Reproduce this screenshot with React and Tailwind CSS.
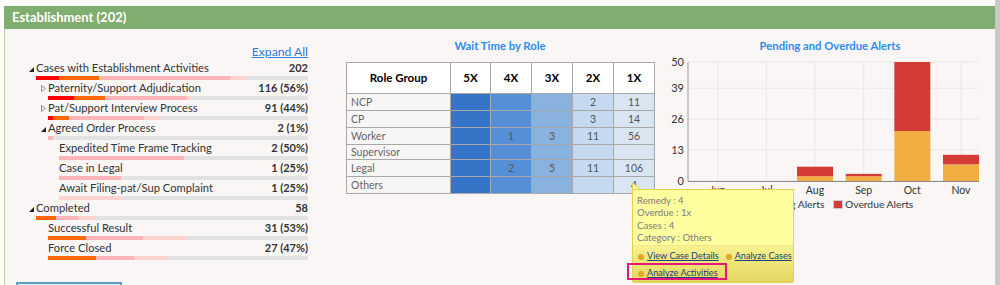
import React from 'react'

const FONT = { fontFamily: 'Lato, "Open Sans", "Liberation Sans", sans-serif' }

const SEG = {
  red: 'bg-[#ff0000]',
  orange: 'bg-[#ff6600]',
  pink: 'bg-[#fdb5ba]',
  light: 'bg-[#fdd4d1]',
}

// tree rows: indent = text start offset from tree start (x 27)
const rows = [
  { label: 'Cases with Establishment Activities', value: '202', indent: 9, toggle: 'open', segs: [['red', 23], ['orange', 40], ['pink', 131], ['light', 17]] },
  { label: 'Paternity/Support Adjudication', value: '116 (56%)', indent: 21, toggle: 'closed', segs: [['red', 26], ['orange', 31], ['pink', 82], ['light', 5]] },
  { label: 'Pat/Support Interview Process', value: '91 (44%)', indent: 21, toggle: 'closed', segs: [['red', 5], ['orange', 16], ['pink', 75], ['light', 17]] },
  { label: 'Agreed Order Process', value: '2 (1%)', indent: 21, toggle: 'open', segs: [['pink', 5]] },
  { label: 'Expedited Time Frame Tracking', value: '2 (50%)', indent: 32, segs: [['pink', 125]] },
  { label: 'Case in Legal', value: '1 (25%)', indent: 32, segs: [['pink', 62]] },
  { label: 'Await Filing-pat/Sup Complaint', value: '1 (25%)', indent: 32, segs: [['light', 62]] },
  { label: 'Completed', value: '58', indent: 9, toggle: 'open', segs: [['orange', 20], ['pink', 22], ['light', 18]] },
  { label: 'Successful Result', value: '31 (53%)', indent: 21, segs: [['orange', 38], ['pink', 57], ['light', 44]] },
  { label: 'Force Closed', value: '27 (47%)', indent: 21, segs: [['orange', 48], ['pink', 38], ['light', 35]] },
]

const Toggle = ({ kind }) => {
  if (kind === 'open') {
    return (
      <svg width="5" height="5" viewBox="0 0 5 5" className="absolute left-[-7px] top-[7px]">
        <polygon points="5,0 5,5 0,5" fill="#222" />
      </svg>
    )
  }
  return (
    <svg width="5" height="7" viewBox="0 0 5 7" className="absolute left-[-7px] top-[5px]">
      <polygon points="0.5,0.5 4.5,3.5 0.5,6.5" fill="none" stroke="#888" strokeWidth="0.9" />
    </svg>
  )
}

const TreeRow = ({ row }) => (
  <div style={{ paddingLeft: row.indent }}>
    <div className="relative flex h-[16px] items-center justify-between text-[11px] leading-[16px] text-[#333]">
      {row.toggle && <Toggle kind={row.toggle} />}
      <span className="text-[11.2px]">{row.label}</span>
      <span className="font-bold text-[#333]">{row.value}</span>
    </div>
    <div className="flex h-[4px] bg-[#e2e2e2]">
      {row.segs.map(([c, w], i) => (
        <div key={i} className={`h-full ${SEG[c]}`} style={{ width: w }} />
      ))}
    </div>
  </div>
)

const tableRows = [
  { role: 'NCP', v: ['', '', '', '2', '11'], h: 'h-[17px]' },
  { role: 'CP', v: ['', '', '', '3', '14'], h: 'h-[17px]' },
  { role: 'Worker', v: ['', '1', '3', '11', '56'], h: 'h-[17px]' },
  { role: 'Supervisor', v: ['', '', '', '', ''], h: 'h-[15px]' },
  { role: 'Legal', v: ['', '2', '5', '11', '106'], h: 'h-[17px]' },
  { role: 'Others', v: ['', '', '', '', '4'], h: 'h-[17px]' },
]
const colBg = ['bg-[#3574c6]', 'bg-[#5590d6]', 'bg-[#8ab2df]', 'bg-[#c5d9f0]', 'bg-[#dae5f2]']

const WaitTable = () => (
  <table className="w-[308px] table-fixed border-collapse text-[10.5px]">
    <colgroup>
      <col className="w-[104px]" />
      <col className="w-[40px]" />
      <col className="w-[41px]" />
      <col className="w-[41px]" />
      <col className="w-[41px]" />
      <col className="w-[41px]" />
    </colgroup>
    <thead>
      <tr className="h-[31px] bg-white">
        {['Role Group', '5X', '4X', '3X', '2X', '1X'].map((h) => (
          <th key={h} className="border border-[#a8a8a8] p-0 text-center text-[11.5px] font-bold text-black">{h}</th>
        ))}
      </tr>
    </thead>
    <tbody>
      {tableRows.map((r) => (
        <tr key={r.role} className={r.h}>
          <td className="border border-[#a8a8a8] bg-[#f7f5f5] p-0 pl-[4px] leading-[13px] text-[#666]">{r.role}</td>
          {r.v.map((v, i) => (
            <td key={i} className={`border border-[#a8a8a8] p-0 text-center leading-[13px] text-[#555] ${colBg[i]}`}>{v}</td>
          ))}
        </tr>
      ))}
    </tbody>
  </table>
)

const months = ['Jun', 'Jul', 'Aug', 'Sep', 'Oct', 'Nov']
const pending = [0, 0, 2, 2, 21, 7]
const overdue = [0, 0, 4, 1, 29, 4]

const AlertsChart = () => {
  const top = 8
  const base = 127
  const k = (base - top) / 50
  const cx = (i) => 63.7 + 48.66 * i
  const ticks = [50, 39, 26, 13, 0]
  const ty = (v) => base - v * k
  return (
    <svg width="341" height="160" viewBox="0 0 341 160" className="block">
      {ticks.map((t) => (
        <g key={t}>
          <line x1="34" x2="325" y1={ty(t)} y2={ty(t)} stroke="#e9e7e7" strokeWidth="1" />
          <text x="30" y={ty(t) + 4} textAnchor="end" fontSize="11" fill="#333" style={FONT}>{t}</text>
        </g>
      ))}
      {months.map((m, i) => (
        <line key={m} x1={cx(i)} x2={cx(i)} y1={top} y2={base} stroke="#e9e7e7" strokeWidth="1" />
      ))}
      {months.map((m, i) => {
        const p = pending[i] * k
        const o = overdue[i] * k
        if (!p && !o) return null
        return (
          <g key={m}>
            <rect x={cx(i) - 18} y={base - p} width="36" height={p} fill="#f0ae43" />
            <rect x={cx(i) - 18} y={base - p - o} width="36" height={o} fill="#d23b36" />
          </g>
        )
      })}
      <line x1="34" x2="325" y1={base + 0.5} y2={base + 0.5} stroke="#8a8a8a" strokeWidth="1.2" />
      <line x1="34" x2="34" y1={top} y2={base} stroke="#9a9a9a" strokeWidth="1" />
      {months.map((m, i) => (
        <text key={m} x={cx(i)} y="140" textAnchor="middle" fontSize="10.5" fill="#333" style={FONT}>{m}</text>
      ))}
      <rect x="93.5" y="146.5" width="9" height="8" fill="#f0ae43" stroke="#ccc" />
      <text x="105" y="154" fontSize="10.3" fill="#333" style={FONT}>Pending Alerts</text>
      <rect x="179.5" y="146.5" width="9" height="8" fill="#d23b36" stroke="#ccc" />
      <text x="191" y="154" fontSize="10.3" fill="#333" style={FONT}>Overdue Alerts</text>
    </svg>
  )
}

const Bullet = () => <span className="mr-[3px] inline-block h-[6px] w-[6px] rounded-full bg-[#e5a42a] align-middle" />

const Tooltip = () => (
  <>
    <svg width="10" height="7" viewBox="0 0 10 7" className="absolute left-[632px] top-[183px]">
      <polygon points="0.5,0 0.5,7 9,7" fill="#ffff9f" stroke="#e6d24a" strokeWidth="1" />
    </svg>
    <div className="absolute left-[632px] top-[189px] h-[93px] w-[162px] border border-[#e6d24a] bg-[#ffff9f] text-[9.6px] leading-[12.3px] text-[#7a7a7a]">
      <div className="px-[4px] pt-[5px]">
        <div>Remedy : 4</div>
        <div>Overdue : 1x</div>
        <div>Cases : 4</div>
        <div>Category : Others</div>
      </div>
      <div className="mt-[1px] h-[38px] border-t border-[#eee48a] bg-gradient-to-b from-[#f8f38f] to-[#e3d45c] px-[5px] pt-[1px] text-[9.1px] leading-[17px] text-[#23407a]">
        <div className="flex gap-[7px]">
          <span className="whitespace-nowrap"><Bullet /><span className="underline">View Case Details</span></span>
          <span className="whitespace-nowrap"><Bullet /><span className="underline">Analyze Cases</span></span>
        </div>
        <div className="whitespace-nowrap"><Bullet /><span className="underline">Analyze Activities</span></div>
      </div>
    </div>
    <div className="absolute left-[627px] top-[263px] h-[17px] w-[100px] border-2 border-[#e5177d]" />
  </>
)

export default function App() {
  return (
    <div className="relative flex h-[285px] w-[1000px] overflow-hidden bg-white" style={FONT}>
      <div className="w-[995px]">
        <div className="h-[6px]" />
        <div className="ml-[4px] w-[991px]">
          <div className="flex h-[23px] items-center bg-[#80ae6e] pl-[8px] text-[13px] font-bold text-white">
            Establishment (202)
          </div>
          <div className="flex h-[260px] border-l border-[#b5d2a8] bg-[#f9f6f5]">
            {/* tree */}
            <div className="ml-[11px] w-[292px] pt-[15px]">
              <div className="pl-[11px]">
                <div className="flex h-[16px] justify-end text-[12.2px] leading-[16px]">
                  <span className="text-[#2f7be0] underline">Expand All</span>
                </div>
                {rows.map((r) => (
                  <TreeRow key={r.label} row={r} />
                ))}
              </div>
              <div className="mt-[22px] h-[20px] w-[106px] border-2 border-[#5b9dc3] bg-[#eaf3f8]" />
            </div>

            {/* table */}
            <div className="ml-[38px] w-[308px] pt-[9px]">
              <div className="h-[16px] text-center text-[11.3px] font-bold leading-[16px] text-[#2c8cf0]">Wait Time by Role</div>
              <div className="mt-[8px]">
                <WaitTable />
              </div>
            </div>

            {/* chart */}
            <div className="w-[341px] pt-[9px]">
              <div className="ml-[96px] h-[16px] w-[160px] text-center text-[11.3px] font-bold leading-[16px] text-[#2c8cf0]">Pending and Overdue Alerts</div>
              <AlertsChart />
            </div>
          </div>
        </div>
      </div>
      <div className="h-full w-[5px] bg-[#c9c9c9]" />
      <Tooltip />
    </div>
  )
}
